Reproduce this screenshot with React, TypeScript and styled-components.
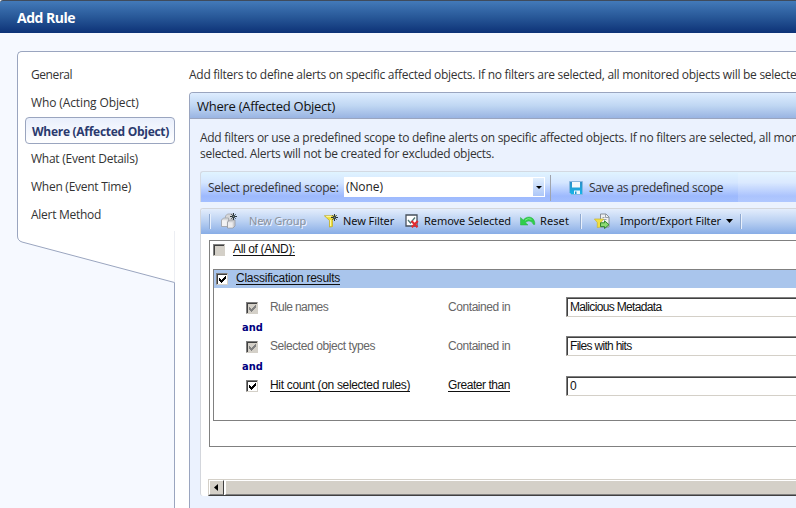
import React from 'react';
import styled, { createGlobalStyle, css } from 'styled-components';

const LINE = '#9aa5bf';
const UI = '"Open Sans", "Noto Sans", sans-serif';
const TOOL = '"Noto Sans", "DejaVu Sans", sans-serif';
const CLASSIC = '"Liberation Sans", Arial, sans-serif';

const GlobalStyle = createGlobalStyle`
  * { box-sizing: border-box; }
  html, body { margin: 0; padding: 0; overflow: hidden; }
  svg { display: block; flex: none; }
`;

const Window = styled.div`
  width: 796px;
  height: 508px;
  display: flex;
  flex-direction: column;
  overflow: hidden;
  background: #f6f9ff;
  color: #333;
  font: 12px/16px ${UI};
  white-space: nowrap;
`;

const TitleBar = styled.header`
  height: 33px;
  flex: none;
  display: flex;
  align-items: center;
  padding: 1px 0 0 17px;
  border-top: 1px solid #3f4b5c;
  border-top-left-radius: 3px;
  background: linear-gradient(#437ab9, #285898 50%, #0d3277);
  color: #fff;
  font-size: 14px;
  font-weight: 700;
  letter-spacing: -0.5px;
`;

const Frame = styled.div`
  flex: 1;
  min-height: 0;
  display: flex;
  margin: 18px 0 0 17px;
`;

const NavColumn = styled.nav`
  width: 158px;
  flex: none;
  display: flex;
  flex-direction: column;
`;

const NavList = styled.div`
  height: 180px;
  padding: 9px 0 0 7px;
  border: solid ${LINE};
  border-width: 1px 0 0 1px;
  border-top-left-radius: 5px;
  background: #fff;
`;

const NavItem = styled.div<{ $ls: number; $selected?: boolean }>`
  height: 28px;
  padding-left: 6px;
  line-height: 28px;
  letter-spacing: ${(p) => p.$ls}px;
  ${(p) =>
    p.$selected &&
    css`
      height: 27px;
      margin-bottom: 1px;
      line-height: 27px;
      border: 1px solid ${LINE};
      border-radius: 4px;
      background: linear-gradient(#e9effc, #fff);
      color: #2b3a6e;
      font-weight: 700;
    `}
`;

const NavEdge = styled.div`
  flex: 1;
  border-right: 1px solid ${LINE};
`;

const Main = styled.main`
  flex: 1;
  min-width: 0;
  display: flex;
  flex-direction: column;
  padding: 15px 0 0 14px;
  border-top: 1px solid ${LINE};
  background: #fff;
`;

const Text = styled.span<{ $ls?: number; $w?: number }>`
  flex: none;
  letter-spacing: ${(p) => p.$ls ?? 0}px;
  ${(p) => p.$w && `width: ${p.$w}px;`}
`;

const Intro = styled.p`
  margin: 0 0 9px;
  letter-spacing: -0.27px;
`;

const Panel = styled.section`
  flex: 1;
  border: solid ${LINE};
  border-width: 1px 0 0 1px;
  border-top-left-radius: 4px;
  background: #ebf2fe;
  overflow: hidden;
`;

const PanelTitle = styled.h2`
  height: 26px;
  margin: 0;
  padding: 1px 0 0 7px;
  border-bottom: 1px solid ${LINE};
  background: linear-gradient(#deedff, #c0d7f3 50%, #99b4e2);
  color: #111;
  font: 400 13px/24px ${UI};
  letter-spacing: -0.27px;
`;

const PanelBody = styled.div`
  padding: 11px 0 0 10px;
`;

const Description = styled.p`
  margin: 0 0 9px;
  letter-spacing: -0.28px;
`;

const ScopeBar = styled.div`
  height: 31px;
  display: flex;
  align-items: center;
  padding: 1px 0 0 7px;
  border: solid #d3d9e2;
  border-width: 1px 0 0 1px;
  border-top-left-radius: 3px;
  background: linear-gradient(#e0f4ff, #d5e6ff 35%, #9db9fd 80%, #a3bfff);
`;

const Select = styled.div`
  width: 201px;
  height: 20px;
  flex: none;
  display: flex;
  justify-content: space-between;
  margin: 0 5px 1px 6px;
  padding: 1px 1px 1px 2px;
  background: #fff;
  color: #222;
  line-height: 18px;
`;

const SelectButton = styled.div`
  width: 11px;
  height: 18px;
  display: flex;
  align-items: center;
  justify-content: center;
  background: linear-gradient(#e2f0fe, #acc6f8);
`;

const ScopeDivider = styled.div`
  width: 1px;
  height: 26px;
  margin-right: 18px;
  background: #a0a4ac;
`;

const SaveLabel = styled.span`
  width: 155px;
  flex: none;
  padding-left: 6px;
  letter-spacing: -0.33px;
`;

const ScopeTail = styled.div`
  flex: 1;
  height: 29px;
  background: rgba(255, 255, 255, 0.15);
`;

const Editor = styled.div`
  height: 288px;
  display: flex;
  flex-direction: column;
  margin-top: 6px;
  border: solid #d3d6dc;
  border-width: 1px 0 0 1px;
  border-radius: 3px 0 0 3px;
  background: #fff;
  overflow: hidden;
`;

const Toolbar = styled.div`
  height: 25px;
  flex: none;
  display: flex;
  align-items: center;
  padding: 0 0 1px 8px;
  background: linear-gradient(#e3edfc, #b9d0f2 50%, #88ade6);
  color: #111;
  font: 11px/16px ${TOOL};
`;

const Tool = styled.div<{ $w: number; $gap: number; $disabled?: boolean }>`
  width: ${(p) => p.$w}px;
  flex: none;
  display: flex;
  align-items: center;
  gap: ${(p) => p.$gap}px;
  ${(p) => p.$disabled && 'color: #8b919d; text-shadow: 1px 1px 0 #f4f8ff;'}
`;

const ToolDivider = styled.div<{ $after: number }>`
  width: 2px;
  height: 15px;
  flex: none;
  margin-right: ${(p) => p.$after}px;
  border-left: 1px solid #8fa9d0;
  border-right: 1px solid #e8f0fc;
`;

const Canvas = styled.div`
  flex: 1;
  display: flex;
  flex-direction: column;
  justify-content: space-between;
  padding: 6px 0 0 7px;
  font: 12px/14px ${CLASSIC};
  color: #111;
`;

const GroupBox = styled.div`
  height: 207px;
  margin-left: 1px;
  padding: 2px 0 0 3px;
  border: solid #808080;
  border-width: 1px 0 1px 1px;
`;

const GroupTitle = styled.div`
  height: 26px;
  display: flex;
  gap: 8px;
`;

const FilterBox = styled.div`
  height: 152px;
  border: solid #808080;
  border-width: 1px 0 1px 1px;
`;

const FilterTitle = styled.div`
  height: 18px;
  display: flex;
  gap: 8px;
  padding: 2px 0 0 2px;
  margin-bottom: 8px;
  background: #a9c5ec;
`;

const Condition = styled.div<{ $active?: boolean }>`
  height: ${(p) => (p.$active ? 23 : 21)}px;
  display: grid;
  grid-template-columns: 24px 178px 118px 1fr;
  padding-left: 32px;
  align-items: center;
  color: ${(p) => (p.$active ? '#111' : '#666')};
`;

const Joiner = styled.div`
  height: 18px;
  padding-left: 28px;
  color: #000080;
  font: bold 11px/21px "DejaVu Sans Condensed", "DejaVu Sans", sans-serif;
  font-stretch: condensed;
`;

const Link = styled.span<{ $ls: number }>`
  justify-self: start;
  height: 13px;
  margin-bottom: 1px;
  line-height: 13px;
  border-bottom: 1px solid #111;
  letter-spacing: ${(p) => p.$ls}px;
`;

const Field = styled.div<{ $ls?: number }>`
  height: 20px;
  padding: 0 0 0 2px;
  border: solid;
  border-width: 1px 0 1px 1px;
  border-color: #808080 #d4d0c8 #d4d0c8 #808080;
  box-shadow: inset 1px 1px 0 #404040;
  background: #fff;
  color: #111;
  line-height: 19px;
  text-indent: 1px;
  letter-spacing: ${(p) => p.$ls ?? 0}px;
`;

const Box = styled.div<{ $grey?: boolean; $drop?: boolean }>`
  width: 12px;
  height: 12px;
  flex: none;
  margin-top: ${(p) => (p.$drop ? 3 : 1)}px;
  border: 1px solid;
  border-color: #808080 #d4d0c8 #d4d0c8 #808080;
  box-shadow: inset 1px 1px 0 #404040;
  background: ${(p) => (p.$grey ? '#d4d0c8' : '#fff')};
`;

const ScrollBar = styled.div`
  height: 17px;
  display: flex;
  border: solid;
  border-width: 1px 0 1px 1px;
  border-color: #d4d0c8 #404040 #404040 #d4d0c8;
`;

const ScrollButton = styled.div`
  width: 15px;
  display: flex;
  align-items: center;
  justify-content: center;
  padding-right: 2px;
  border: 1px solid;
  border-color: #fff #404040 #808080 #fff;
  background: #d4d0c8;
`;

const ScrollThumb = styled.div`
  flex: 1;
  margin-left: 1px;
  border: solid;
  border-width: 1px 0 1px 1px;
  border-color: #fff #808080 #808080 #fff;
  background: #d4d0c8;
`;

const Check = ({ on, grey, soft }: { on?: boolean; grey?: boolean; soft?: boolean }) => (
  <Box $grey={grey} $drop={soft}>
    {on && (
      <svg width="10" height="10" viewBox="0 0 10 10" shapeRendering="crispEdges">
        <path
          d="M2 4h1v3h-1zM3 5h1v3h-1zM4 6h1v3h-1zM5 5h1v3h-1zM6 4h1v3h-1zM7 3h1v3h-1zM8 2h1v3h-1z"
          fill={soft ? '#808080' : '#000'}
        />
      </svg>
    )}
  </Box>
);

const Spark = ({ x, y }: { x: number; y: number }) => (
  <g transform={`translate(${x} ${y})`} stroke="#27343c" strokeWidth="1">
    <path d="M3.5 0v7M0 3.500h7" />
    <path d="M1.200 1.200l4.600 4.600M5.800 1.200L1.200 5.800" strokeWidth=".8" />
    <circle cx="3.500" cy="3.500" r="0.8" fill="#7d8d80" stroke="none" />
  </g>
);

const GroupIcon = () => (
  <svg width="17" height="16" viewBox="0 0 17 16">
    <path d="M4.500 4.500V3L6.500 1H12v7H4.500z" fill="#d6d7d9" stroke="#a3a5aa" strokeWidth=".8" />
    <path d="M.5 7L2.500 5h5v7L6 13.500H.5z" fill="#d9dadc" stroke="#a0a2a7" strokeWidth=".8" />
    <path d="M1 7.300h4.800v5.800H1z" fill="#f3f3f4" />
    <path d="M6.500 9l2-2H14v6l-2 2H6.500z" fill="#cfd0d3" stroke="#96989e" strokeWidth=".8" />
    <path d="M7 9.300h4.700v5.300H7z" fill="#ededee" />
    <Spark x={9} y={0} />
  </svg>
);

const FilterIcon = () => (
  <svg width="15" height="14" viewBox="0 0 15 14">
    <path d="M.4 1.800h11.700L8.500 6.500v6l-3 .6V6.500z" fill="#f0df3a" stroke="#c2ad28" strokeWidth=".8" />
    <path d="M2.200 2.600h5M6.500 6v6" fill="none" stroke="#fff9a8" />
    <Spark x={7} y={0} />
  </svg>
);

const RemoveIcon = () => (
  <svg width="14" height="14" viewBox="0 0 14 14">
    <path d="M1 1h11v11H1z" fill="#fff" stroke="#47505c" strokeWidth="1.300" />
    <path d="M3 6l2.500 3L10 3.500" fill="none" stroke="#4f7774" strokeWidth="1.300" />
    <path d="M6.500 7l6 6.300M12.800 7l-6 6.300" stroke="#e22c30" strokeWidth="2.100" />
  </svg>
);

const ResetIcon = () => (
  <svg width="16" height="12" viewBox="0 0 16 12">
    <path
      d="M.5 2.500v7.500h7.500L5.500 7.800C7.500 5.600 11 5 13.500 9.500h1.300C15.500 3 8.500-1 3.300 5z"
      fill="#2fce4b"
      stroke="#28b042"
      strokeWidth=".5"
    />
    <path d="M5 5.300Q8 2.500 11.500 4.300" fill="none" stroke="#8df08f" strokeWidth=".8" />
  </svg>
);

const ExportIcon = () => (
  <svg width="16" height="16" viewBox="0 0 16 16">
    <path d="M6.500 1h5.500l3 3v10H6.500z" fill="#eef0f2" stroke="#80868e" strokeWidth=".9" />
    <path d="M11.500 1v3.500H15M8.500 4.500h2M8.500 6.500h4" fill="none" stroke="#9198a1" strokeWidth=".9" />
    <path d="M.4 6h9.200L6.800 9.500V14l-3.500.6V9.500z" fill="#f0e044" stroke="#c9b330" strokeWidth=".7" />
    <path d="M6.500 9.800h4V7.800l4.500 3.900-4.500 3.900v-2h-4z" fill="#8cdb72" stroke="#247e26" strokeWidth=".9" />
  </svg>
);

const SaveIcon = () => (
  <svg width="14" height="14" viewBox="0 0 14 14">
    <defs>
      <linearGradient id="disk" x2="0" y2="1">
        <stop offset="0" stopColor="#2f8cc6" />
        <stop offset="1" stopColor="#12b6ea" />
      </linearGradient>
    </defs>
    <path d="M.5.500h13v13h-11l-2-2z" fill="url(#disk)" stroke="#8fb6dc" strokeWidth=".7" />
    <path d="M3 1h8v5.500H3z" fill="#f3f8fc" />
    <path d="M5 9.500h6V13H5z" fill="#eef6fb" />
    <path d="M6 10.500h1.500V13H6z" fill="#1797cf" />
  </svg>
);

const Arrow = ({ w, h }: { w: number; h: number }) => (
  <svg width={w} height={h}>
    <path d={`M0 0H${w}L${w / 2} ${h}z`} fill="#000" />
  </svg>
);

export default function App() {
  return (
    <Window>
      <GlobalStyle />
      <TitleBar>Add Rule</TitleBar>
      <Frame>
        <NavColumn>
          <NavList>
            <NavItem $ls={-0.42}>General</NavItem>
            <NavItem $ls={-0.12}>Who (Acting Object)</NavItem>
            <NavItem $ls={-0.28} $selected>Where (Affected Object)</NavItem>
            <NavItem $ls={-0.25}>What (Event Details)</NavItem>
            <NavItem $ls={-0.26}>When (Event Time)</NavItem>
            <NavItem $ls={-0.28}>Alert Method</NavItem>
          </NavList>
          <svg width="158" height="52" viewBox="0 0 158 52">
            <path d="M.5 0V5Q.5 9.500 5 11L157.500 51.500H158V0z" fill="#fff" />
            <path d="M157.500 0V51" stroke="#eceef3" />
            <path d="M.5 0V5Q.5 9.500 5 11L157.500 51.500V52" fill="none" stroke={LINE} />
          </svg>
          <NavEdge />
        </NavColumn>
        <Main>
          <Intro>
            Add filters to define alerts on specific affected objects. If no filters are selected, all monitored objects will be selected.
          </Intro>
          <Panel>
            <PanelTitle>Where (Affected Object)</PanelTitle>
            <PanelBody>
              <Description>
                Add filters or use a predefined scope to define alerts on specific affected objects. If no filters are selected, all monitored
                <br />
                selected. Alerts will not be created for excluded objects.
              </Description>
              <ScopeBar>
                <Text $ls={-0.26} $w={130}>Select predefined scope:</Text>
                <Select>
                  <Text $ls={-0.1}>(None)</Text>
                  <SelectButton><Arrow w={6} h={3} /></SelectButton>
                </Select>
                <ScopeDivider />
                <SaveIcon />
                <SaveLabel>Save as predefined scope</SaveLabel>
                <ScopeTail />
              </ScopeBar>
              <Editor>
                <Toolbar>
                  <ToolDivider $after={10} />
                  <Tool $w={103} $gap={11} $disabled><GroupIcon /><Text $ls={-0.14}>New Group</Text></Tool>
                  <Tool $w={81} $gap={4}><FilterIcon /><Text $ls={-0.08}>New Filter</Text></Tool>
                  <Tool $w={115} $gap={5}><RemoveIcon /><Text $ls={-0.06}>Remove Selected</Text></Tool>
                  <Tool $w={60} $gap={4}><ResetIcon /><Text $ls={0.1}>Reset</Text></Tool>
                  <ToolDivider $after={12} />
                  <Tool $w={146} $gap={10}>
                    <ExportIcon />
                    <Text $ls={-0.09} $w={96}>Import/Export Filter</Text>
                    <Arrow w={7} h={4} />
                  </Tool>
                  <ToolDivider $after={0} />
                </Toolbar>
                <Canvas>
                  <GroupBox>
                    <GroupTitle><Check grey /><Link $ls={-0.36}>All of (AND):</Link></GroupTitle>
                    <FilterBox>
                      <FilterTitle><Check on /><Link $ls={-0.24}>Classification results</Link></FilterTitle>
                      <Condition>
                        <Check on grey soft />
                        <Text $ls={-0.6}>Rule names</Text>
                        <Text $ls={-0.43}>Contained in</Text>
                        <Field $ls={-0.66}>Malicious Metadata</Field>
                      </Condition>
                      <Joiner>and</Joiner>
                      <Condition>
                        <Check on grey soft />
                        <Text $ls={-0.43}>Selected object types</Text>
                        <Text $ls={-0.43}>Contained in</Text>
                        <Field $ls={-0.7}>Files with hits</Field>
                      </Condition>
                      <Joiner>and</Joiner>
                      <Condition $active>
                        <Check on />
                        <Link $ls={-0.32}>Hit count (on selected rules)</Link>
                        <Link $ls={-0.45}>Greater than</Link>
                        <Field>0</Field>
                      </Condition>
                    </FilterBox>
                  </GroupBox>
                  <ScrollBar>
                    <ScrollButton>
                      <svg width="4" height="7"><path d="M4 0v7L0 3.500z" fill="#000" /></svg>
                    </ScrollButton>
                    <ScrollThumb />
                  </ScrollBar>
                </Canvas>
              </Editor>
            </PanelBody>
          </Panel>
        </Main>
      </Frame>
    </Window>
  );
}
